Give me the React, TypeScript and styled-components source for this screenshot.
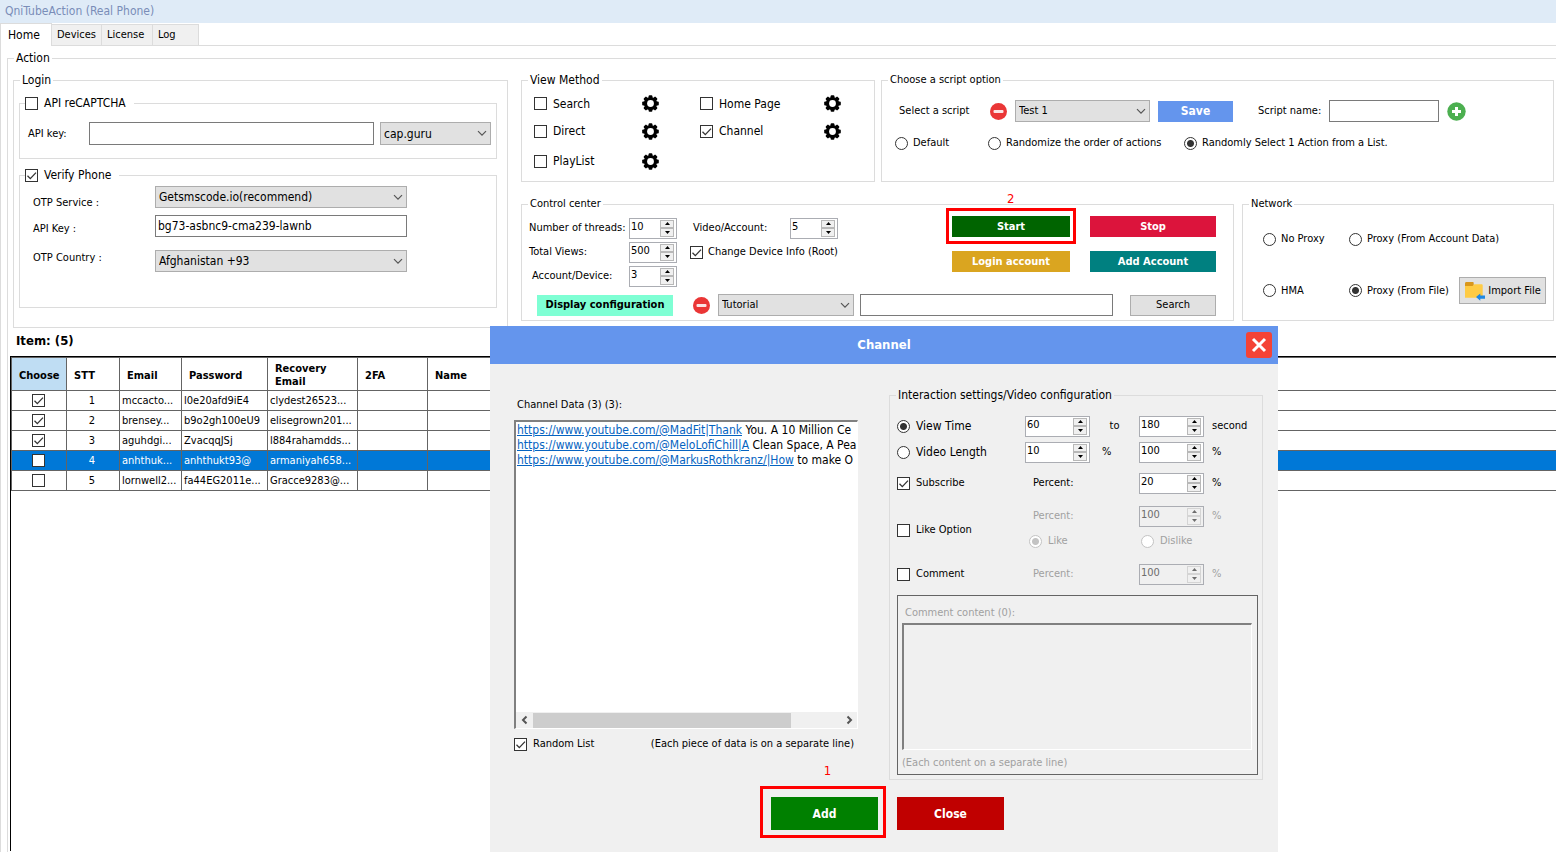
import React from "react";
import styled, { createGlobalStyle, css } from "styled-components";

const svgUrl = (body: string, w: number, h: number) =>
  `url("data:image/svg+xml,${encodeURIComponent(
    `<svg xmlns='http://www.w3.org/2000/svg' width='${w}' height='${h}' viewBox='0 0 ${w} ${h}'>${body}</svg>`
  )}")`;

const tick = svgUrl("<path d='M1.5 5.8 4.3 8.6 10 2.6' fill='none' stroke='#333' stroke-width='1.3'/>", 11, 11);
const chevron = svgUrl("<path d='M1 1.2 5 5.2 9 1.2' fill='none' stroke='#555' stroke-width='1.2'/>", 10, 7);

const line = "#dcdcdc";

const GlobalStyle = createGlobalStyle`
  *, *::before, *::after { box-sizing: border-box; }
  body {
    margin: 0;
    background: #fff;
    color: #000;
    font-family: "DejaVu Sans Condensed", "Noto Sans", sans-serif;
    font-size: 11px;
    line-height: 16px;
    white-space: nowrap;
  }
  button, input, select, textarea { font: inherit; color: inherit; margin: 0; }
`;

const Window = styled.div`
  position: relative;
  display: flex;
  flex-direction: column;
  min-height: 100vh;
  overflow: hidden;
`;

const TitleBar = styled.header`
  height: 23px;
  padding: 3px 5px;
  background: #dfebf7;
  color: #7a8db8;
  font-size: 12px;
`;

const TabBar = styled.nav`
  display: flex;
  align-items: flex-end;
  height: 23px;
  border-bottom: 1px solid ${line};
`;

const Tab = styled.button<{ $active?: boolean; $width: number }>`
  width: ${p => p.$width}px;
  height: ${p => (p.$active ? 23 : 21)}px;
  padding: 0 4px;
  border: 1px solid ${line};
  border-left-width: ${p => (p.$active ? 1 : 0)}px;
  border-bottom: 0;
  margin-bottom: ${p => (p.$active ? -1 : 0)}px;
  padding-left: ${p => (p.$active ? 7 : 5)}px;
  background: ${p => (p.$active ? "#fff" : "#f0f0f0")};
  font-size: ${p => (p.$active ? 12 : 11)}px;
  text-align: left;
`;

const Page = styled.main`
  display: flex;
  flex: 1;
  padding: 4px 0 0 6px;
  border-left: 1px solid ${line};
`;

const Group = styled.fieldset`
  min-width: 0;
  margin: 0;
  padding: 0;
  border: 1px solid ${line};
`;

const Legend = styled.legend<{ $size?: number }>`
  display: flex;
  height: 16px;
  margin-left: 6px;
  padding: 0 2px;
  font-size: ${p => p.$size ?? 12}px;
`;

const LoginLegend = styled(Legend)`
  margin-left: 1px;
`;

const ActionGroup = styled(Group)`
  flex: 1;
  border-right: 0;
  border-bottom: 0;
`;

const Panels = styled.div`
  display: grid;
  grid-template-columns: 495fr 1033fr;
  gap: 13px;
  padding: 6px 2px 0 5px;
`;

const LoginGroup = styled(Group)`
  padding: 7px 10px 19px 5px;
`;

const CaptchaGroup = styled(Group)`
  margin-bottom: 8px;
`;

const ToggleLegend = styled(Legend)`
  margin-left: 5px;
  padding: 0 8px 0 0;
`;

const CaptchaRow = styled.div`
  display: grid;
  grid-template-columns: 61px 1fr 117px;
  align-items: center;
  padding: 11px 5px 13px 8px;
`;

const VerifyBody = styled.div`
  padding: 3px 8px 35px 13px;
  font-size: 12px;
`;

const OtpRow = styled.div<{ $height: number; $after: number; $align: "start" | "end" }>`
  display: grid;
  grid-template-columns: 122px minmax(0, 252px);
  height: ${p => p.$height}px;
  margin-bottom: ${p => p.$after}px;
  label { align-self: ${p => p.$align}; font-size: 11px; }
`;

const Stack = styled.div`
  display: grid;
  grid-template-rows: 110px 125px;
  align-content: start;
  gap: 14px;
`;

const TopPanels = styled.div`
  display: grid;
  grid-template-columns: 354fr 673fr;
  gap: 6px;
`;

const BottomPanels = styled.div`
  display: grid;
  grid-template-columns: 713fr 312fr;
  gap: 8px;
`;

const TextBox = styled.input<{ $height?: number }>`
  width: 100%;
  min-width: 0;
  height: ${p => p.$height ?? 22}px;
  padding: 0 2px;
  border: 1px solid #7a7a7a;
  background: #fff;
  outline: 0;
`;

const Select = styled.select<{ $height?: number }>`
  appearance: none;
  width: 100%;
  min-width: 0;
  height: ${p => p.$height ?? 22}px;
  padding: 0 18px 0 3px;
  border: 1px solid #adadad;
  border-radius: 0;
  background: #e1e1e1 ${chevron} no-repeat right 3px center;
`;

const CaptchaSelect = styled(Select)`
  width: auto;
  margin-left: 6px;
  font-size: 12px;
`;

const SearchBox = styled(TextBox)`
  flex: 1;
  width: 0;
`;

const markStyle = css`
  appearance: none;
  flex: none;
  width: 13px;
  height: 13px;
  border: 1px solid #333;
  background: #fff center / 11px 11px no-repeat;
`;

const Tick = styled.input.attrs({ type: "checkbox" })`
  ${markStyle}
  display: block;
  &:checked { background-image: ${tick}; }
`;

const Dot = styled.input.attrs({ type: "radio" })`
  ${markStyle}
  border-radius: 50%;
  &:checked { background-image: radial-gradient(circle, #333 0 3px, transparent 4px); }
  &:disabled { border-color: #c3c3c3; }
  &:disabled:checked { background-image: radial-gradient(circle, #c3c3c3 0 3px, transparent 4px); }
`;

const MarkLabel = styled.label<{ $size?: number; $gap?: number; $muted?: boolean }>`
  display: flex;
  align-items: center;
  gap: ${p => p.$gap ?? 6}px;
  font-size: ${p => p.$size ?? 11}px;
  color: ${p => (p.$muted ? "#a0a0a0" : "#000")};
`;

const ViewGrid = styled.div`
  display: grid;
  grid-template-columns: 108px 58px 124px 17px;
  grid-template-rows: 27px 28px 32px;
  align-items: center;
  padding: 2px 0 0 12px;
`;

const IconButton = styled.button`
  display: block;
  flex: none;
  padding: 0;
  border: 0;
  background: none;
  line-height: 0;
  svg { display: block; }
`;

const ScriptRow = styled.div`
  display: flex;
  align-items: center;
  gap: 8px;
  padding: 12px 0 0 17px;
`;

const ScriptLabel = styled.label<{ $width: number; $before?: number }>`
  width: ${p => p.$width}px;
  margin-left: ${p => p.$before ?? 0}px;
`;

const SelectSlot = styled.div<{ $width: number }>`
  display: flex;
  width: ${p => p.$width}px;
`;

const ModeRow = styled.div`
  display: grid;
  grid-template-columns: 93px 196px 1fr;
  padding: 13px 0 0 13px;
`;

const SolidButton = styled.button<{ $color: string; $text?: string; $width?: number; $height?: number; $size?: number }>`
  width: ${p => (p.$width ? `${p.$width}px` : "100%")};
  height: ${p => p.$height ?? 21}px;
  padding: 0;
  border: 0;
  background: ${p => p.$color};
  color: ${p => p.$text ?? "#fff"};
  font-size: ${p => p.$size ?? 11}px;
  font-weight: 700;
`;

const GreyButton = styled.button<{ $width: number; $height: number }>`
  display: flex;
  align-items: center;
  justify-content: center;
  gap: 3px;
  width: ${p => p.$width}px;
  height: ${p => p.$height}px;
  padding: 0;
  border: 1px solid #adadad;
  background: #e1e1e1;
`;

const ControlTop = styled.div`
  display: flex;
  justify-content: space-between;
  padding: 4px 17px 0 7px;
`;

const CounterGrid = styled.div`
  display: grid;
  grid-template-columns: 100px 61px 100px 48px;
  grid-template-rows: repeat(3, 24px);
  align-items: center;
`;

const IndentedLabel = styled.label`
  padding-left: 3px;
`;

const DeviceInfo = styled(MarkLabel)`
  grid-column: 3 / span 2;
`;

const ActionButtons = styled.div`
  display: grid;
  grid-template-columns: 118px 126px;
  grid-template-rows: 21px 21px;
  gap: 14px 20px;
`;

const CalloutAnchor = styled.div`
  position: relative;
`;

const Callout = styled.span<{ $inset: string; $lift: number; $at: number }>`
  position: absolute;
  inset: ${p => p.$inset};
  border: 3px solid #f00;
  color: #f00;
  font-size: 13px;
  pointer-events: none;
  b {
    position: absolute;
    left: ${p => p.$at}%;
    bottom: calc(100% + ${p => p.$lift}px);
    margin-left: -4px;
    font-weight: 400;
  }
`;

const ControlBottom = styled.div`
  display: flex;
  align-items: center;
  gap: 8px;
  padding: 6px 17px 0 15px;
`;

const DisplayButton = styled(SolidButton)`
  margin-right: 12px;
`;

const SearchFields = styled.div`
  display: flex;
  flex: 1;
  gap: 6px;
  margin-right: 9px;
`;

const NetworkBody = styled.div`
  display: grid;
  grid-template-columns: 86px 110px 1fr;
  grid-template-rows: 14px 27px;
  gap: 31px 0;
  align-items: center;
  padding: 20px 0 0 20px;
`;

const WideRadio = styled(MarkLabel)`
  grid-column: 2 / span 2;
`;

const ItemCount = styled.h2`
  margin: 5px 0 7px 8px;
  font-size: 13px;
  line-height: 16px;
`;

const Sheet = styled.div`
  flex: 1;
  min-height: 495px;
  margin-left: 2px;
  border: solid #000;
  border-width: 1px 0 0 1px;
`;

const Table = styled.table`
  width: 100%;
  table-layout: fixed;
  border-collapse: collapse;
`;

const HeadCell = styled.th<{ $active?: boolean }>`
  height: 33px;
  padding: 2px 7px 0;
  border: 1px solid #646464;
  background: ${p => (p.$active ? "#bfddf3" : "#fff")};
  font-weight: 700;
  line-height: 13px;
  text-align: left;
  white-space: normal;
  &:last-child { border-right: 0; }
`;

const Row = styled.tr<{ $selected?: boolean }>`
  height: 20px;
  background: ${p => (p.$selected ? "#0078d7" : "#fff")};
  color: ${p => (p.$selected ? "#fff" : "#000")};
`;

const Cell = styled.td<{ $center?: boolean }>`
  padding: 0 ${p => (p.$center ? 4 : 2)}px 0 2px;
  border: 1px solid #646464;
  line-height: 18px;
  text-align: ${p => (p.$center ? "center" : "left")};
  input { margin: 0 auto; }
  &:last-child { border-right: 0; }
`;

const SpinBox = styled.span<{ $width: number; $off?: boolean }>`
  display: flex;
  width: ${p => p.$width}px;
  height: 21px;
  padding: 1px 2px 1px 1px;
  border: 1px solid #abadb3;
  background: ${p => (p.$off ? "#f0f0f0" : "#fff")};
  color: ${p => (p.$off ? "#6d6d6d" : "#000")};
  font-size: 11px;
`;

const SpinInput = styled.input`
  appearance: textfield;
  flex: 1;
  width: 0;
  height: 15px;
  padding: 0;
  border: 0;
  background: none;
  outline: 0;
  &::-webkit-inner-spin-button { display: none; }
`;

const SpinButtons = styled.span`
  display: grid;
  grid-template-rows: 1fr 1fr;
  width: 14px;
`;

const SpinButton = styled.button`
  display: flex;
  align-items: center;
  justify-content: center;
  padding: 0;
  border: 1px solid #b8b8b8;
  background: #f0f0f0;
  color: inherit;
  &:disabled { border-color: #d4d4d4; }
`;

const Dialog = styled.section`
  position: absolute;
  top: 326px;
  bottom: 0;
  left: 490px;
  width: 788px;
  background: #f0f0f0;
`;

const DialogHeader = styled.header`
  display: grid;
  grid-template-columns: 1fr auto 1fr;
  align-items: center;
  height: 38px;
  padding: 0 6px;
  background: #6495ed;
  color: #fff;
`;

const DialogTitle = styled.h1`
  grid-column: 2;
  margin: 0;
  font-size: 13px;
  line-height: 16px;
`;

const CloseIcon = styled(IconButton)`
  justify-self: end;
`;

const DialogBody = styled.div`
  display: grid;
  grid-template-columns: 344px 374px;
  gap: 31px;
  padding: 23px 15px 0 24px;
`;

const DataColumn = styled.div`
  padding-top: 10px;
`;

const DataTitle = styled.div`
  padding-left: 3px;
  margin-bottom: 7px;
`;

const DataBox = styled.div`
  display: flex;
  flex-direction: column;
  height: 309px;
  border: solid;
  border-width: 2px 1px 1px 2px;
  border-color: #808080 #fff #fff #808080;
  background: #fff;
`;

const DataLines = styled.div`
  flex: 1;
  padding: 1px 0 0 1px;
  overflow: hidden;
  font-size: 12px;
  line-height: 15px;
  a { color: #0563c1; }
`;

const ScrollBar = styled.div`
  display: grid;
  grid-template-columns: 17px 1fr 17px;
  align-items: center;
  height: 16px;
  background: #f0f0f0;
`;

const ScrollArrow = styled(IconButton)`
  justify-self: center;
`;

const ScrollThumb = styled.span`
  width: 84%;
  height: 15px;
  background: #cdcdcd;
`;

const DataFooter = styled.div`
  display: flex;
  justify-content: space-between;
  padding: 7px 4px 0 0;
`;

const SettingsGroup = styled(Group)`
  height: 393px;
`;

const SettingsGrid = styled.div`
  display: grid;
  grid-template-columns: 128px 65px 49px 65px 1fr;
  grid-template-rows: 26px 26px 36px 30px 20px 46px;
  align-items: center;
  padding: 10px 0 0 7px;
`;

const Between = styled.span`
  justify-self: center;
`;

const Note = styled.span<{ $muted?: boolean; $column?: number; $indent?: number; $size?: number }>`
  grid-column: ${p => p.$column ?? "auto"};
  padding-left: ${p => p.$indent ?? 8}px;
  color: ${p => (p.$muted ? "#a0a0a0" : "#000")};
  font-size: ${p => p.$size ?? 11}px;
`;

const LikeToggle = styled(MarkLabel)`
  grid-row: 4 / span 2;
  grid-column: 1;
  align-self: end;
  height: 42px;
`;

const Slot = styled.div<{ $column: number; $span?: number; $indent?: number }>`
  grid-column: ${p => p.$column} / span ${p => p.$span ?? 1};
  padding-left: ${p => p.$indent ?? 0}px;
`;

const CommentBox = styled.div`
  display: flex;
  flex-direction: column;
  height: 180px;
  margin: -2px 4px 0 7px;
  padding: 9px 5px 3px 4px;
  border: 1px solid #646464;
  color: #a0a0a0;
  label { padding: 0 3px 2px; }
`;

const CommentArea = styled.textarea`
  flex: 1;
  margin-bottom: 5px;
  border: solid;
  border-width: 2px 1px 1px 2px;
  border-color: #808080 #fff #fff #808080;
  background: #f0f0f0;
  resize: none;
`;

const DialogActions = styled.footer`
  display: flex;
  gap: 19px;
  padding: 17px 0 0 281px;
`;

const Gear = () => (
  <svg width="17" height="17" viewBox="0 0 18 18" aria-hidden="true">
    {[0, 45, 90, 135].map(a => (
      <rect key={a} x="7" y="0.2" width="4" height="17.6" rx="1" transform={`rotate(${a} 9 9)`} />
    ))}
    <circle cx="9" cy="9" r="7" />
    <circle cx="9" cy="9" r="3.6" fill="#fff" />
  </svg>
);

const Minus = () => (
  <svg width="17" height="17" viewBox="0 0 17 17" aria-hidden="true">
    <circle cx="8.500" cy="8.500" r="8.500" fill="#ea3636" />
    <rect x="3.500" y="7" width="10" height="3" rx="1" fill="#fbe3e3" />
  </svg>
);

const Plus = () => (
  <svg width="19" height="19" viewBox="0 0 19 19" aria-hidden="true">
    <circle cx="9.500" cy="9.500" r="9.200" fill="#4caf50" />
    <path d="M8 5h3v3h3v3h-3v3H8v-3H5V8h3z" fill="#fff" />
  </svg>
);

const Folder = () => (
  <svg width="21" height="20" viewBox="0 0 21 20" aria-hidden="true">
    <path d="M1 2.500C1 1.600 1.500 1 2.400 1h6.300c.6 0 1 .5 1 1v4H1z" fill="#d9971c" />
    <path d="M1 5h7.500l2-1.800h7c.8 0 1.200.5 1.200 1.300v12.300H1z" fill="#fecb45" />
    <path d="M12 16l4.300-3.600v2.100H21v3.200h-4.700v2.100z" fill="#1e88e5" />
  </svg>
);

const CloseX = () => (
  <svg width="26" height="26" viewBox="0 0 26 26" aria-hidden="true">
    <rect width="26" height="26" rx="3" fill="#f44336" />
    <path d="M7 7l12 12M19 7L7 19" stroke="#fff" strokeWidth="3" />
  </svg>
);

const Arrow = ({ left }: { left?: boolean }) => (
  <svg width="8" height="10" viewBox="0 0 8 10" aria-hidden="true">
    <path d={left ? "M5.500 1.500L2 5l3.500 3.500" : "M2.500 1.500L6 5 2.500 8.500"} fill="none" stroke="#555" strokeWidth="2" />
  </svg>
);

type SpinProps = { label: string; id?: string; value: number; width?: number; disabled?: boolean };

const Spinner = ({ label, id, value, width = 48, disabled }: SpinProps) => (
  <SpinBox $width={width} $off={disabled}>
    <SpinInput id={id} type="number" aria-label={label} defaultValue={value} disabled={disabled} />
    <SpinButtons>
      <SpinButton aria-label={`Increase ${label}`} disabled={disabled}>
        <svg width="5" height="3" viewBox="0 0 5 3"><path d="M0 3L2.500 0 5 3z" fill="currentColor" /></svg>
      </SpinButton>
      <SpinButton aria-label={`Decrease ${label}`} disabled={disabled}>
        <svg width="5" height="3" viewBox="0 0 5 3"><path d="M0 0l2.500 3L5 0z" fill="currentColor" /></svg>
      </SpinButton>
    </SpinButtons>
  </SpinBox>
);

type MarkProps = { text: string; checked?: boolean; name?: string; size?: number; gap?: number; disabled?: boolean; as?: typeof MarkLabel };

const Check = ({ text, checked, size, gap, as: L = MarkLabel }: MarkProps) => (
  <L $size={size} $gap={gap}>
    <Tick defaultChecked={checked} />
    {text}
  </L>
);

const Radio = ({ text, checked, name, size, gap = 5, disabled, as: L = MarkLabel }: MarkProps) => (
  <L $size={size} $gap={gap} $muted={disabled}>
    <Dot name={name} defaultChecked={checked} disabled={disabled} />
    {text}
  </L>
);

const GearButton = ({ name }: { name: string }) => (
  <IconButton aria-label={`${name} settings`}><Gear /></IconButton>
);

const accounts = [
  { on: true, email: "mccacto...", password: "l0e20afd9iE4", recovery: "clydest26523..." },
  { on: true, email: "brensey...", password: "b9o2gh100eU9", recovery: "elisegrown201..." },
  { on: true, email: "aguhdgi...", password: "ZvacqqJSj", recovery: "l884rahamdds..." },
  { on: false, email: "anhthuk...", password: "anhthukt93@", recovery: "armaniyah658..." },
  { on: false, email: "lornwell2...", password: "fa44EG2011e...", recovery: "Gracce9283@..." },
];

const channels = [
  ["https://www.youtube.com/@MadFit|Thank", " You. A 10 Million Ce"],
  ["https://www.youtube.com/@MeloLofiChill|A", " Clean Space, A Pea"],
  ["https://www.youtube.com/@MarkusRothkranz/|How", " to make O"],
];

const LoginPanel = () => (
  <LoginGroup>
    <LoginLegend>Login</LoginLegend>
    <CaptchaGroup>
      <ToggleLegend><Check text="API reCAPTCHA" size={12} /></ToggleLegend>
      <CaptchaRow>
        <label htmlFor="captcha-key">API key:</label>
        <TextBox id="captcha-key" $height={23} />
        <CaptchaSelect aria-label="Captcha service" $height={23}><option>cap.guru</option></CaptchaSelect>
      </CaptchaRow>
    </CaptchaGroup>
    <Group>
      <ToggleLegend><Check text="Verify Phone" size={12} checked /></ToggleLegend>
      <VerifyBody>
        <OtpRow $height={25} $after={4} $align="end">
          <label htmlFor="otp-service">OTP Service :</label>
          <Select id="otp-service"><option>Getsmscode.io(recommend)</option></Select>
        </OtpRow>
        <OtpRow $height={22} $after={13} $align="end">
          <label htmlFor="otp-key">API Key :</label>
          <TextBox id="otp-key" defaultValue="bg73-asbnc9-cma239-lawnb" />
        </OtpRow>
        <OtpRow $height={22} $after={0} $align="start">
          <label htmlFor="otp-country">OTP Country :</label>
          <Select id="otp-country"><option>Afghanistan +93</option></Select>
        </OtpRow>
      </VerifyBody>
    </Group>
  </LoginGroup>
);

const ViewPanel = () => (
  <Group>
    <Legend>View Method</Legend>
    <ViewGrid>
      <Check text="Search" size={12} />
      <GearButton name="Search" />
      <Check text="Home Page" size={12} />
      <GearButton name="Home Page" />
      <Check text="Direct" size={12} />
      <GearButton name="Direct" />
      <Check text="Channel" size={12} checked />
      <GearButton name="Channel" />
      <Check text="PlayList" size={12} />
      <GearButton name="PlayList" />
    </ViewGrid>
  </Group>
);

const ScriptPanel = () => (
  <Group>
    <Legend $size={11}>Choose a script option</Legend>
    <ScriptRow>
      <ScriptLabel htmlFor="script" $width={83}>Select a script</ScriptLabel>
      <IconButton aria-label="Delete script"><Minus /></IconButton>
      <SelectSlot $width={135}><Select id="script"><option>Test 1</option></Select></SelectSlot>
      <SolidButton $color="#6495ed" $width={75} $size={12}>Save</SolidButton>
      <ScriptLabel htmlFor="script-name" $width={63} $before={17}>Script name:</ScriptLabel>
      <SelectSlot $width={110}><TextBox id="script-name" /></SelectSlot>
      <IconButton aria-label="Add script"><Plus /></IconButton>
    </ScriptRow>
    <ModeRow>
      <Radio name="mode" text="Default" />
      <Radio name="mode" text="Randomize the order of actions" />
      <Radio name="mode" text="Randomly Select 1 Action from a List." checked />
    </ModeRow>
  </Group>
);

const ControlPanel = () => (
  <Group>
    <Legend $size={11}>Control center</Legend>
    <ControlTop>
      <CounterGrid>
        <label htmlFor="threads">Number of threads:</label>
        <Spinner id="threads" label="Number of threads" value={10} />
        <IndentedLabel htmlFor="videos">Video/Account:</IndentedLabel>
        <Spinner id="videos" label="Video/Account" value={5} />
        <label htmlFor="views">Total Views:</label>
        <Spinner id="views" label="Total Views" value={500} />
        <Check as={DeviceInfo} text="Change Device Info (Root)" checked gap={5} />
        <IndentedLabel htmlFor="devices">Account/Device:</IndentedLabel>
        <Spinner id="devices" label="Account/Device" value={3} />
      </CounterGrid>
      <ActionButtons>
        <CalloutAnchor>
          <SolidButton $color="#006400">Start</SolidButton>
          <Callout $inset="-8px -6px -7px" $lift={4} $at={50}><b>2</b></Callout>
        </CalloutAnchor>
        <SolidButton $color="#dc143c">Stop</SolidButton>
        <SolidButton $color="#daa520">Login account</SolidButton>
        <SolidButton $color="#008080">Add Account</SolidButton>
      </ActionButtons>
    </ControlTop>
    <ControlBottom>
      <DisplayButton $color="#7fffd4" $text="#000" $width={136}>Display configuration</DisplayButton>
      <IconButton aria-label="Remove"><Minus /></IconButton>
      <SearchFields>
        <SelectSlot $width={136}><Select aria-label="Topic"><option>Tutorial</option></Select></SelectSlot>
        <SearchBox aria-label="Search text" />
      </SearchFields>
      <GreyButton $width={86} $height={21}>Search</GreyButton>
    </ControlBottom>
  </Group>
);

const NetworkPanel = () => (
  <Group>
    <Legend $size={11}>Network</Legend>
    <NetworkBody>
      <Radio name="net" text="No Proxy" />
      <Radio as={WideRadio} name="net" text="Proxy (From Account Data)" />
      <Radio name="net" text="HMA" />
      <Radio name="net" text="Proxy (From File)" checked />
      <GreyButton $width={87} $height={27}><Folder />Import File</GreyButton>
    </NetworkBody>
  </Group>
);

const AccountTable = () => (
  <Table>
    <colgroup>
      {[55, 53, 62, 86, 90, 70, 90].map((w, i) => <col key={i} width={w} />)}
      <col />
    </colgroup>
    <thead>
      <tr>
        <HeadCell $active>Choose</HeadCell>
        <HeadCell>STT</HeadCell>
        <HeadCell>Email</HeadCell>
        <HeadCell>Password</HeadCell>
        <HeadCell>Recovery Email</HeadCell>
        <HeadCell>2FA</HeadCell>
        <HeadCell>Name</HeadCell>
        <HeadCell />
      </tr>
    </thead>
    <tbody>
      {accounts.map((a, i) => (
        <Row key={a.email} $selected={i === 3}>
          <Cell $center><Tick aria-label={`Choose ${i + 1}`} defaultChecked={a.on} /></Cell>
          <Cell $center>{i + 1}</Cell>
          <Cell>{a.email}</Cell>
          <Cell>{a.password}</Cell>
          <Cell>{a.recovery}</Cell>
          <Cell /><Cell /><Cell />
        </Row>
      ))}
    </tbody>
  </Table>
);

const ChannelDialog = () => (
  <Dialog role="dialog" aria-labelledby="channel-title">
    <DialogHeader>
      <DialogTitle id="channel-title">Channel</DialogTitle>
      <CloseIcon aria-label="Close dialog"><CloseX /></CloseIcon>
    </DialogHeader>
    <DialogBody>
      <DataColumn>
        <DataTitle>Channel Data (3) (3):</DataTitle>
        <DataBox>
          <DataLines>
            {channels.map(([url, rest]) => (
              <div key={url}><a href={url}>{url}</a>{rest}</div>
            ))}
          </DataLines>
          <ScrollBar>
            <ScrollArrow aria-label="Scroll left"><Arrow left /></ScrollArrow>
            <ScrollThumb />
            <ScrollArrow aria-label="Scroll right"><Arrow /></ScrollArrow>
          </ScrollBar>
        </DataBox>
        <DataFooter>
          <Check text="Random List" checked />
          <span>(Each piece of data is on a separate line)</span>
        </DataFooter>
      </DataColumn>
      <SettingsGroup>
        <Legend>Interaction settings/Video configuration</Legend>
        <SettingsGrid>
          <Radio name="time" text="View Time" size={12} gap={6} checked />
          <Spinner label="View time from" value={60} width={65} />
          <Between>to</Between>
          <Spinner label="View time to" value={180} width={65} />
          <Note>second</Note>

          <Radio name="time" text="Video Length" size={12} gap={6} />
          <Spinner label="Length from" value={10} width={65} />
          <Note $indent={12}>%</Note>
          <Spinner label="Length to" value={100} width={65} />
          <Note>%</Note>

          <Check text="Subscribe" checked />
          <Note $column={2}>Percent:</Note>
          <Slot $column={4}><Spinner label="Subscribe percent" value={20} width={65} /></Slot>
          <Note>%</Note>

          <Check as={LikeToggle} text="Like Option" />
          <Note $column={2} $muted>Percent:</Note>
          <Slot $column={4}><Spinner label="Like percent" value={100} width={65} disabled /></Slot>
          <Note $muted>%</Note>

          <Slot $column={2} $span={2} $indent={4}><Radio name="like" text="Like" gap={6} checked disabled /></Slot>
          <Slot $column={4} $span={2} $indent={2}><Radio name="like" text="Dislike" gap={6} disabled /></Slot>

          <Check text="Comment" />
          <Note $column={2} $muted>Percent:</Note>
          <Slot $column={4}><Spinner label="Comment percent" value={100} width={65} disabled /></Slot>
          <Note $muted>%</Note>
        </SettingsGrid>
        <CommentBox>
          <label htmlFor="comments">Comment content (0):</label>
          <CommentArea id="comments" disabled />
          <span>(Each content on a separate line)</span>
        </CommentBox>
      </SettingsGroup>
    </DialogBody>
    <DialogActions>
      <CalloutAnchor>
        <SolidButton $color="#008000" $width={107} $height={33} $size={12}>Add</SolidButton>
        <Callout $inset="-11px -8px -8px -11px" $lift={10} $at={54}><b>1</b></Callout>
      </CalloutAnchor>
      <SolidButton $color="#c00000" $width={107} $height={33} $size={12}>Close</SolidButton>
    </DialogActions>
  </Dialog>
);

export default function App() {
  return (
    <Window>
      <GlobalStyle />
      <TitleBar>QniTubeAction (Real Phone)</TitleBar>
      <TabBar>
        <Tab $active $width={52}>Home</Tab>
        <Tab $width={50}>Devices</Tab>
        <Tab $width={51}>License</Tab>
        <Tab $width={46}>Log</Tab>
      </TabBar>
      <Page>
        <ActionGroup>
          <Legend>Action</Legend>
          <Panels>
            <LoginPanel />
            <Stack>
              <TopPanels><ViewPanel /><ScriptPanel /></TopPanels>
              <BottomPanels><ControlPanel /><NetworkPanel /></BottomPanels>
            </Stack>
          </Panels>
          <ItemCount>Item: (5)</ItemCount>
          <Sheet><AccountTable /></Sheet>
        </ActionGroup>
      </Page>
      <ChannelDialog />
    </Window>
  );
}
